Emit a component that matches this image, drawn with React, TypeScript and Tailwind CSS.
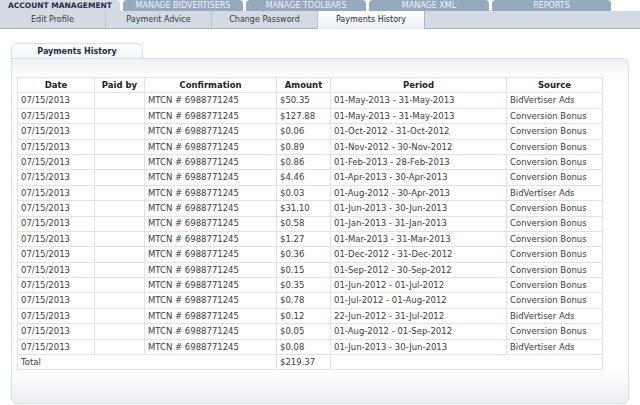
const rows = [
  ["$50.35", "01-May-2013 - 31-May-2013", "BidVertiser Ads"],
  ["$127.88", "01-May-2013 - 31-May-2013", "Conversion Bonus"],
  ["$0.06", "01-Oct-2012 - 31-Oct-2012", "Conversion Bonus"],
  ["$0.89", "01-Nov-2012 - 30-Nov-2012", "Conversion Bonus"],
  ["$0.86", "01-Feb-2013 - 28-Feb-2013", "Conversion Bonus"],
  ["$4.46", "01-Apr-2013 - 30-Apr-2013", "Conversion Bonus"],
  ["$0.03", "01-Aug-2012 - 30-Apr-2013", "BidVertiser Ads"],
  ["$31.10", "01-Jun-2013 - 30-Jun-2013", "Conversion Bonus"],
  ["$0.58", "01-Jan-2013 - 31-Jan-2013", "Conversion Bonus"],
  ["$1.27", "01-Mar-2013 - 31-Mar-2013", "Conversion Bonus"],
  ["$0.36", "01-Dec-2012 - 31-Dec-2012", "Conversion Bonus"],
  ["$0.15", "01-Sep-2012 - 30-Sep-2012", "Conversion Bonus"],
  ["$0.35", "01-Jun-2012 - 01-Jul-2012", "Conversion Bonus"],
  ["$0.78", "01-Jul-2012 - 01-Aug-2012", "Conversion Bonus"],
  ["$0.12", "22-Jun-2012 - 31-Jul-2012", "BidVertiser Ads"],
  ["$0.05", "01-Aug-2012 - 01-Sep-2012", "Conversion Bonus"],
  ["$0.08", "01-Jun-2013 - 30-Jun-2013", "BidVertiser Ads"],
];

const topTabs = [
  { label: "MANAGE BIDVERTISERS", w: "w-[120px]" },
  { label: "MANAGE TOOLBARS", w: "w-[120px]" },
  { label: "MANAGE XML", w: "w-[120px]" },
  { label: "REPORTS", w: "w-[119px]" },
];

const subTabs = ["Edit Profile", "Payment Advice", "Change Password"];

const cell = "border border-[#dde3ea] px-[3px] h-[15.4px] leading-none align-middle";

export default function App() {
  return (
    <main
      className="h-[405px] w-[640px] overflow-hidden bg-white text-[#3d3d3d]"
      style={{ fontFamily: '"DejaVu Sans", Verdana, sans-serif' }}
    >
      <nav className="flex h-[11px] items-stretch gap-[3px] text-[8px] leading-[11px]">
        <div className="w-[120px] rounded-tr-[4px] bg-[#d2dbe3] text-center text-[7.5px] font-bold text-[#1c2e47]">
          ACCOUNT MANAGEMENT
        </div>
        {topTabs.map((t) => (
          <div
            key={t.label}
            className={`${t.w} rounded-t-[4px] bg-[#95a9bf] text-center text-[#eef2f6]`}
          >
            {t.label}
          </div>
        ))}
      </nav>
      <div className="flex h-[18px] border-b border-[#a9b6c3] bg-[#d2dbe3] text-[8px] leading-[17px] text-[#3a3a3a]">
        {subTabs.map((s) => (
          <div key={s} className="w-[106px] border-r border-[#b9c5d0] text-center">
            {s}
          </div>
        ))}
        <div className="relative -mb-px w-[107px] border-r border-[#a9b6c3] bg-gradient-to-b from-white to-[#e9eef2] text-center text-[#1c2e47]">
          Payments History
        </div>
      </div>

      <section className="ml-[11px] mt-[14px] w-[618px]">
        <div className="h-[15px] w-[132px] rounded-t-[6px] border border-b-0 border-[#d9e0e7] bg-gradient-to-b from-white to-[#f2f5f8] text-center text-[8px] font-bold leading-[16px] text-[#1c2e47]">
          Payments History
        </div>
        <div className="h-[346px] rounded-b-[6px] rounded-tr-[6px] border border-[#d9e0e7] bg-[linear-gradient(to_bottom,#eef2f5_0px,#ffffff_18px,#ffffff_310px,#eceff2_100%)] pl-[5px] pt-[18px]">
          <table className="w-[585px] table-fixed border-collapse bg-white text-[8.5px]">
            <colgroup>
              <col className="w-[77px]" />
              <col className="w-[50px]" />
              <col className="w-[132px]" />
              <col className="w-[54px]" />
              <col className="w-[176px]" />
              <col className="w-[96px]" />
            </colgroup>
            <thead>
              <tr className="font-bold text-[#222]">
                <th className={`${cell} text-center`}>Date</th>
                <th className={`${cell} text-center`}>Paid by</th>
                <th className={`${cell} text-center`}>Confirmation</th>
                <th className={`${cell} text-center`}>Amount</th>
                <th className={`${cell} text-center`}>Period</th>
                <th className={`${cell} text-center`}>Source</th>
              </tr>
            </thead>
            <tbody>
              {rows.map(([amount, period, source], i) => (
                <tr key={i}>
                  <td className={cell}>07/15/2013</td>
                  <td className={cell}></td>
                  <td className={cell}>MTCN # 6988771245</td>
                  <td className={cell}>{amount}</td>
                  <td className={cell}>{period}</td>
                  <td className={cell}>{source}</td>
                </tr>
              ))}
              <tr>
                <td className={cell} colSpan={3}>
                  Total
                </td>
                <td className={cell}>$219.37</td>
                <td className={cell} colSpan={2}></td>
              </tr>
            </tbody>
          </table>
        </div>
      </section>
    </main>
  );
}
